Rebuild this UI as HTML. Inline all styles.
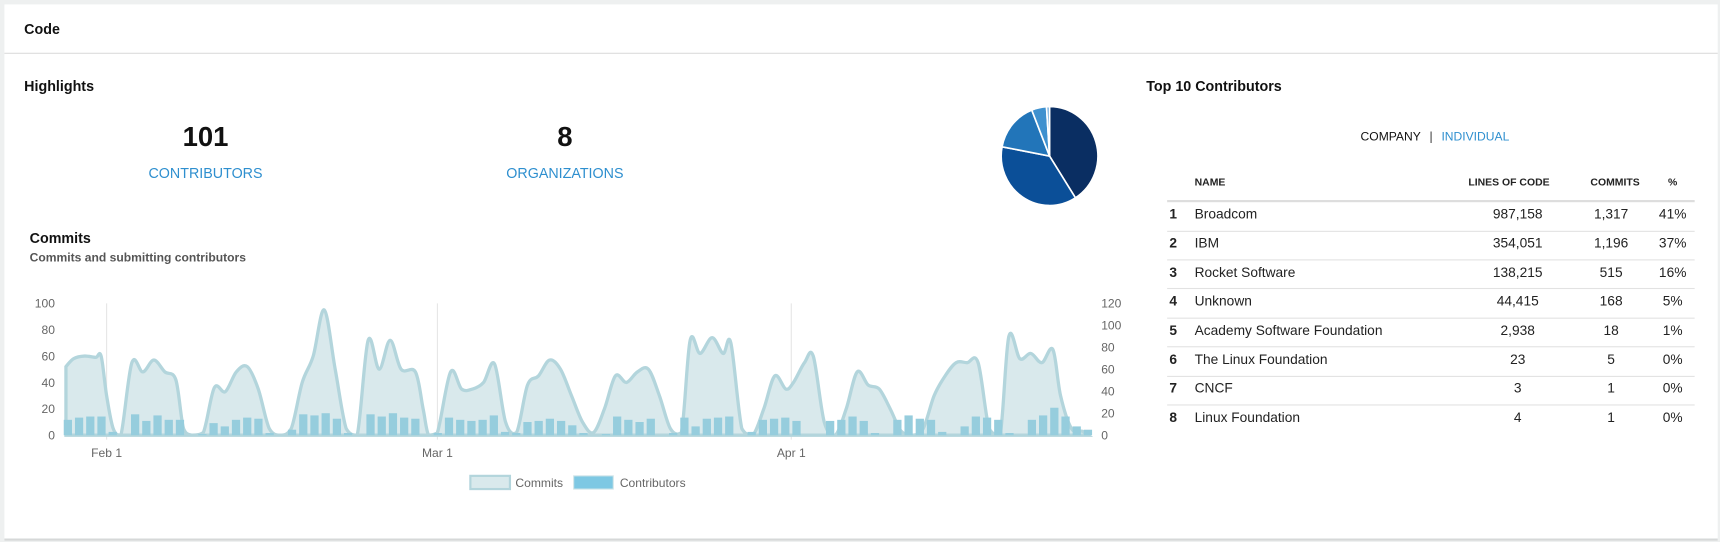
<!DOCTYPE html>
<html><head><meta charset="utf-8"><style>
html,body{margin:0;padding:0;width:1720px;height:542px;overflow:hidden;background:#eef0f0;font-family:"Liberation Sans",sans-serif}
#w{position:absolute;left:0;top:0;width:1565px;height:493px;transform:scale(1.099);transform-origin:0 0}
.card{position:absolute;left:4px;top:4px;width:1559px;height:486px;background:#fff;border-bottom:2px solid #d6d8d8}
.a{position:absolute;white-space:nowrap}
.b{font-weight:bold;color:#111}
.blue{color:#2e8fcf}
.hl{position:absolute;left:1062px;width:480px;height:0;border-top:1px solid #e2e2e2}
</style></head><body><div id="w">
<div class="card"></div>
<div class="a b" style="left:22px;top:19px;font-size:13px">Code</div>
<div style="position:absolute;left:4px;top:48px;width:1559px;border-top:1px solid #dcdcdc"></div>
<div class="a b" style="left:22px;top:71px;font-size:13px">Highlights</div>
<div class="a b" style="left:137px;width:100px;text-align:center;top:111px;font-size:25px">101</div>
<div class="a blue" style="left:117px;width:140px;text-align:center;top:150px;font-size:13px">CONTRIBUTORS</div>
<div class="a b" style="left:464px;width:100px;text-align:center;top:111px;font-size:25px">8</div>
<div class="a blue" style="left:434px;width:160px;text-align:center;top:150px;font-size:13px">ORGANIZATIONS</div>
<div class="a b" style="left:27px;top:209px;font-size:13px">Commits</div>
<div class="a" style="left:27px;top:229px;font-size:11px;color:#555;font-weight:bold">Commits and submitting contributors</div>
<svg class="a" style="left:0;top:0" width="1040" height="493" id="ch">
<g stroke="#e6e6e6" stroke-width="1"><line x1="97" y1="276" x2="97" y2="400"/><line x1="398" y1="276" x2="398" y2="400"/><line x1="720" y1="276" x2="720" y2="400"/></g>
<path id="area" fill="#d9e9ec" stroke="#b3d5dc" stroke-width="3"/>
<g id="bars" fill="#96cddd"></g>
<g font-size="11" fill="#666" font-family="Liberation Sans,sans-serif">
<text x="50" y="280" text-anchor="end">100</text><text x="50" y="304" text-anchor="end">80</text><text x="50" y="328" text-anchor="end">60</text><text x="50" y="352" text-anchor="end">40</text><text x="50" y="376" text-anchor="end">20</text><text x="50" y="400" text-anchor="end">0</text>
<text x="1002" y="280">120</text><text x="1002" y="300">100</text><text x="1002" y="320">80</text><text x="1002" y="340">60</text><text x="1002" y="360">40</text><text x="1002" y="380">20</text><text x="1002" y="400">0</text>
<text x="97" y="416" text-anchor="middle">Feb 1</text><text x="398" y="416" text-anchor="middle">Mar 1</text><text x="720" y="416" text-anchor="middle">Apr 1</text>
<rect x="428" y="433" width="36" height="12" fill="#d9e9ec" stroke="#b3d5dc" stroke-width="2"/><text x="469" y="443">Commits</text>
<rect x="522" y="433" width="36" height="12" fill="#7ec8e3" stroke="#cfe4e8" stroke-width="1"/><text x="564" y="443">Contributors</text>
</g>
</svg>
<svg class="a" style="left:905px;top:92px" width="100" height="100">
<g transform="translate(50,50)" stroke="#fff" stroke-width="1.5" id="pie"></g>
</svg>
<div class="a b" style="left:1043px;top:71px;font-size:13px">Top 10 Contributors</div>
<div class="a" style="left:1238px;top:119px;font-size:11px;color:#111">COMPANY <span style="color:#333;margin:0 5px">|</span> <span class="blue">INDIVIDUAL</span></div>
<div class="a" style="left:1087px;top:161px;font-size:9.5px;color:#222;font-weight:bold">NAME</div>
<div class="a" style="left:1320px;width:90px;text-align:right;top:161px;font-size:9.5px;color:#222;font-weight:bold">LINES OF CODE</div>
<div class="a" style="left:1420px;width:72px;text-align:right;top:161px;font-size:9.5px;color:#222;font-weight:bold">COMMITS</div>
<div class="a" style="left:1510px;width:24px;text-align:center;top:161px;font-size:9.5px;color:#222;font-weight:bold">%</div>
<div class="hl" style="top:182px;border-top:2px solid #ddd"></div>
<div id="rows"></div>
</div>
<script>
var rows=[["Broadcom","987,158","1,317","41%"],["IBM","354,051","1,196","37%"],["Rocket Software","138,215","515","16%"],["Unknown","44,415","168","5%"],["Academy Software Foundation","2,938","18","1%"],["The Linux Foundation","23","5","0%"],["CNCF","3","1","0%"],["Linux Foundation","4","1","0%"]];
var h="";rows.forEach(function(r,i){var c=196+i*26.4;var t=c-8;
h+='<div class="a" style="left:1064px;top:'+t+'px;font-size:12.5px;font-weight:bold;color:#222">'+(i+1)+'</div>';
h+='<div class="a" style="left:1087px;top:'+t+'px;font-size:12.5px;color:#222">'+r[0]+'</div>';
h+='<div class="a" style="left:1331px;width:100px;text-align:center;top:'+t+'px;font-size:12.5px;color:#222">'+r[1]+'</div>';
h+='<div class="a" style="left:1431px;width:70px;text-align:center;top:'+t+'px;font-size:12.5px;color:#222">'+r[2]+'</div>';
h+='<div class="a" style="left:1502px;width:40px;text-align:center;top:'+t+'px;font-size:12.5px;color:#222">'+r[3]+'</div>';
if(i<7)h+='<div class="hl" style="top:'+(c+13.5)+'px"></div>';});
document.getElementById('rows').innerHTML=h;
var pts=[[60,52],[67,58],[77,60],[87,59],[92,60],[97,30],[103,5],[110,0],[120,55],[130,48],[140,57],[150,48],[160,42],[167,5],[175,0],[185,2],[195,36],[205,33],[215,48],[225,52],[235,35],[245,5],[255,0],[265,5],[275,40],[285,60],[295,95],[305,50],[315,5],[325,0],[335,72],[345,50],[355,72],[365,50],[378,48],[385,20],[390,0],[398,2],[410,48],[420,35],[430,35],[440,40],[450,54],[460,10],[470,2],[480,38],[490,45],[500,57],[510,50],[520,30],[530,10],[540,2],[550,20],[560,45],[570,40],[580,48],[590,50],[600,30],[610,5],[620,2],[628,72],[637,62],[648,74],[658,62],[665,70],[675,5],[685,0],[695,20],[705,45],[715,35],[722,40],[732,55],[740,60],[750,10],[760,0],[770,20],[780,48],[790,38],[800,35],[810,20],[820,3],[830,0],[840,5],[850,30],[860,45],[870,55],[880,55],[890,55],[900,5],[910,0],[918,75],[928,58],[938,62],[948,55],[958,65],[965,30],[975,5],[985,3],[990,0]];
var P=pts.map(function(p){return [p[0],396-p[1]*1.2]});
function cl(y){return Math.min(396,y)}
var d="M"+P[0][0]+","+P[0][1];
for(var i=0;i<P.length-1;i++){var p0=P[i-1]||P[i],p1=P[i],p2=P[i+1],p3=P[i+2]||p2;
d+=" C"+(p1[0]+(p2[0]-p0[0])/6)+","+cl(p1[1]+(p2[1]-p0[1])/6)+" "+(p2[0]-(p3[0]-p1[0])/6)+","+cl(p2[1]-(p3[1]-p1[1])/6)+" "+p2[0]+","+p2[1];}
document.getElementById('area').setAttribute('d',d+" L990,396 L60,396 Z");
var bv=[14,16,17,17,3,0,19,13,18,14,14,0,1,11,8,14,16,15,2,0,5,19,18,20,15,2,0,19,17,20,16,15,0,2,16,14,13,14,18,3,2,12,13,15,13,9,2,0,1,17,14,12,15,0,2,16,8,15,16,17,0,3,14,15,16,13,0,0,13,14,17,13,2,0,14,18,15,14,3,0,8,17,16,14,2,0,14,18,25,17,8,5,2];
var bh="";bv.forEach(function(v,i){var x=58+i*10.2;if(x>990)return;if(v>0)bh+='<rect x="'+x+'" y="'+(396-v)+'" width="7.5" height="'+v+'"/>';});
document.getElementById('bars').innerHTML=bh;
var sl=[[0.41,"#0a2e62"],[0.37,"#0b4f98"],[0.16,"#2275b9"],[0.05,"#3f91cf"],[0.01,"#6aa9dc"]];
var a=-Math.PI/2,ph="",rx=44,ry=45;sl.forEach(function(s){var b=a+s[0]*2*Math.PI;
ph+='<path fill="'+s[1]+'" d="M0,0 L'+(rx*Math.cos(a))+','+(ry*Math.sin(a))+' A'+rx+','+ry+' 0 '+(s[0]>0.5?1:0)+' 1 '+(rx*Math.cos(b))+','+(ry*Math.sin(b))+' Z"/>';a=b;});
document.getElementById('pie').innerHTML=ph;
</script>
</body></html>
